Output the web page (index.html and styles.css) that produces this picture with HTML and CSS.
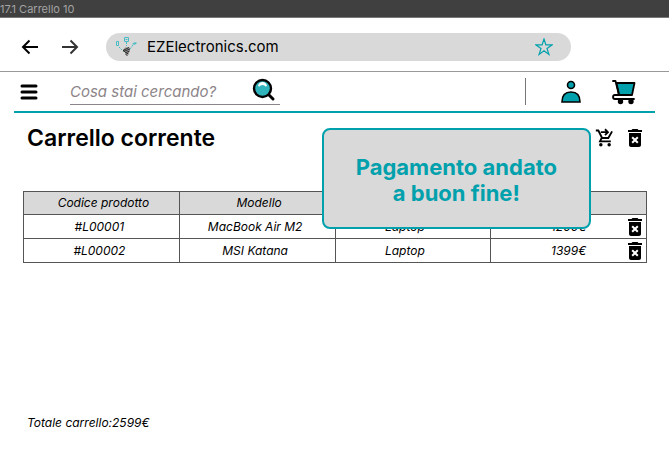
FILE: index.html
```html
<!DOCTYPE html>
<html lang="it">
<head>
<meta charset="utf-8">
<meta name="viewport" content="width=device-width, initial-scale=1">
<title>EZElectronics.com</title>
<link rel="stylesheet" href="styles.css">
</head>
<body>
<svg class="symbols" aria-hidden="true">
  <symbol id="trash" viewBox="0 0 24 24">
    <path d="M6 19c0 1.100.9 2 2 2h8c1.100 0 2-.9 2-2V7H6v12zm2.460-7.120l1.410-1.410L12 12.590l2.120-2.120 1.410 1.410L13.410 14l2.120 2.120-1.410 1.410L12 15.410l-2.120 2.120-1.410-1.410L10.590 14l-2.130-2.120zM15.500 4l-1-1h-5l-1 1H5v2h14V4z"/>
  </symbol>
</svg>
<div class="frame-title">17.1 Carrello 10</div>

<div class="browser-bar">
  <button class="icon-button" type="button" aria-label="Indietro">
    <svg width="18" height="16" viewBox="0 0 18 16" fill="none" stroke="#000" stroke-width="2"><path d="M17 8H2M8.500 1.500 2 8l6.500 6.500"/></svg>
  </button>
  <button class="icon-button" type="button" aria-label="Avanti">
    <svg width="18" height="16" viewBox="0 0 18 16" fill="none" stroke="#333" stroke-width="2"><path d="M1 8h15M9.500 1.500 16 8l-6.500 6.500"/></svg>
  </button>
  <div class="address">
    <svg width="24" height="22" viewBox="0 0 24 22" fill="none">
      <g stroke="#4bbcc5">
        <path d="M1.500 5.500h2v4h-2zM9.500 1.500h4v4h-4zM10.500 3.500h2" />
        <path d="M11.500 6v4M4 11l3 3M18 9l-3 4" stroke-dasharray="2 1"/>
      </g>
      <path d="M17 8q3-3 5-1-2 3-5 1z" fill="#4bbcc5"/>
      <path d="M8 14l2-2.500 4-.5 1 1.500-.5 3.500-3 3.500-1-2.500z" fill="#999"/>
      <path d="M8 14.500l6-3M8.500 15.500l6.500-2.500M10 17l4.500-2M10.500 18.500l3-1.500M11.500 20l1.500-1.500M8 14l2.500 2.500" stroke="#222" stroke-width=".9"/>
    </svg>
    <span class="url">EZElectronics.com</span>
    <button class="icon-button" type="button" aria-label="Aggiungi ai preferiti">
      <svg width="18" height="18" viewBox="0 0 18 18" fill="none" stroke="#00a1ac" stroke-width="1.200"><path d="M9 1l1.900 5.900h6.100l-5 3.600 1.900 5.900L9 12.800l-4.900 3.600L6 10.500 1 6.900h6.100z"/></svg>
    </button>
  </div>
</div>

<header class="site-header">
  <button class="icon-button" type="button" aria-label="Menu">
    <svg width="18" height="16" viewBox="0 0 18 16" stroke="#000" stroke-width="3" stroke-linecap="round"><path d="M2 2h14M2 8h14M2 14h14"/></svg>
  </button>
  <form class="search">
    <input type="search" placeholder="Cosa stai cercando?" aria-label="Cerca prodotti">
    <button class="icon-button" type="button" aria-label="Cerca">
      <svg width="24" height="24" viewBox="0 0 24 24">
        <path d="M17 17l4 4" stroke="#000" stroke-width="3" stroke-linecap="round"/>
        <circle cx="10.500" cy="10.500" r="8.500" fill="#31b3bb" stroke="#000" stroke-width="2.400"/>
        <path d="M6 8Q7 4 10.500 4t4.500 4q-1.500 1-2.500-.5-2-1-4 0-1 1.500-2.500.5z" fill="#fff"/>
      </svg>
    </button>
  </form>
  <div class="account">
    <button class="icon-button" type="button" aria-label="Profilo">
      <svg width="22" height="24" viewBox="0 0 22 24" fill="#00a1ac" stroke="#000" stroke-width="1.600"><circle cx="11" cy="5" r="3.500"/><path d="M2 22q0-10 9-10t9 10z"/></svg>
    </button>
    <button class="icon-button" type="button" aria-label="Carrello">
      <svg width="26" height="26" viewBox="0 0 26 26" fill="none" stroke="#000" stroke-width="1.800" stroke-linejoin="round" stroke-linecap="round">
        <path d="M5.500 4h18L21 16H8z" fill="#00a1ac"/>
        <path d="M2 2h2.500L8 16H4q-2 0-2 2t2 2h19"/>
        <circle cx="9.500" cy="22.500" r="1.800" fill="#000"/><circle cx="20" cy="22.500" r="1.800" fill="#000"/>
      </svg>
    </button>
  </div>
</header>

<main>
  <div class="heading">
    <h1>Carrello corrente</h1>
    <div class="actions">
      <button class="icon-button" type="button" aria-label="Procedi al pagamento">
        <svg width="20" height="20" viewBox="0 0 24 24" fill="none" stroke="#000" stroke-width="2.200">
          <path d="M1 3h3l4.500 9h7.500l4.500-8M8 12l-2 4h13M7 5h8M12 1.500l3.500 3.500L12 8.500"/>
          <circle cx="7" cy="20" r="1" /><circle cx="17" cy="20" r="1"/>
        </svg>
      </button>
      <button class="icon-button" type="button" aria-label="Svuota carrello"><svg width="24" height="24"><use href="#trash"/></svg></button>
    </div>
  </div>

  <table class="cart">
    <thead>
      <tr><th scope="col">Codice prodotto</th><th scope="col">Modello</th><th scope="col"></th><th scope="col"></th></tr>
    </thead>
    <tbody>
      <tr>
        <td>#L00001</td><td>MacBook Air M2</td><td class="category">Laptop</td>
        <td><div class="price"><span>1200€</span><button class="icon-button" type="button" aria-label="Rimuovi MacBook Air M2"><svg width="24" height="24"><use href="#trash"/></svg></button></div></td>
      </tr>
      <tr>
        <td>#L00002</td><td>MSI Katana</td><td class="category">Laptop</td>
        <td><div class="price"><span>1399€</span><button class="icon-button" type="button" aria-label="Rimuovi MSI Katana"><svg width="24" height="24"><use href="#trash"/></svg></button></div></td>
      </tr>
    </tbody>
  </table>

  <p class="total">Totale carrello:2599€</p>
  <div class="toast" role="status">Pagamento andato<br>a buon fine!</div>
</main>
</body>
</html>
```
FILE: styles.css
```css
* {
  box-sizing: border-box;
}

body {
  margin: 0;
  background: #fff;
  color: #000;
  font-family: Inter, sans-serif;
  font-size: 12px;
}

.symbols {
  display: none;
}

svg {
  display: block;
  flex: none;
}

.icon-button {
  flex: none;
  padding: 0;
  border: 0;
  background: none;
  cursor: pointer;
}

.frame-title {
  height: 18px;
  background: #404040;
  border-bottom: 1px solid #777;
  color: #a3a3a3;
  font-size: 11px;
  line-height: 18px;
}

.browser-bar {
  display: flex;
  align-items: center;
  gap: 22px;
  height: 54px;
  padding: 4px 98px 0 21px;
  border-bottom: 1px solid #999;
}

.address {
  display: flex;
  flex: 1;
  align-items: center;
  gap: 8px;
  height: 28px;
  margin-left: 5px;
  padding: 0 18px 0 9px;
  border-radius: 14px;
  background: #d9d9d9;
}

.url {
  flex: 1;
  font-size: 15px;
}

.site-header {
  display: flex;
  align-items: center;
  height: 41px;
  margin: 0 14px;
  padding: 0 18px 0 6px;
  border-bottom: 2px solid #00a1ac;
}

.search {
  display: flex;
  align-items: center;
  width: 210px;
  height: 26px;
  margin: 0 0 0 32px;
  padding: 0 4px 0 0;
  border-bottom: 1px solid #8c8488;
}

.search input {
  flex: 1;
  min-width: 0;
  padding: 0;
  border: 0;
  outline: 0;
  background: none;
  font: italic 15px Inter, sans-serif;
}

.search button {
  align-self: flex-end;
  margin-bottom: 2px;
}

.search input::placeholder {
  color: #8c8488;
}

.account {
  display: flex;
  align-items: center;
  gap: 29px;
  height: 27px;
  margin-left: auto;
  padding-left: 34px;
  border-left: 1px solid #777;
}

main {
  position: relative;
  padding: 0 22px 0 23px;
}

.heading {
  display: flex;
  align-items: center;
  justify-content: space-between;
  height: 50px;
  padding-left: 4px;
}

h1 {
  margin: 0;
  font-size: 23px;
  font-weight: 600;
}

.actions {
  display: flex;
  align-items: center;
  gap: 8px;
}

.cart {
  width: 100%;
  margin-top: 28px;
  border-collapse: collapse;
  table-layout: fixed;
  font-style: italic;
  text-align: center;
}

.cart th,
.cart td {
  height: 24px;
  padding: 0;
  border: 1px solid #555;
  font-weight: 400;
  line-height: 16px;
}

.cart th {
  height: 23px;
  padding-left: 4px;
  background: #d9d9d9;
}

.cart td {
  padding-right: 4px;
}

.cart .category {
  padding-right: 16px;
}

.cart td:last-child {
  padding: 0;
}

.price {
  display: grid;
  grid-template-columns: 1fr auto 1fr;
  align-items: center;
  height: 23px;
}

.price span {
  grid-column: 2;
}

.price button {
  justify-self: end;
  margin-right: -1px;
}

.total {
  margin: 152px 0 0 4px;
  font-style: italic;
  line-height: 16px;
}

.toast {
  position: absolute;
  top: 15px;
  right: 78px;
  padding: 24px 32px 21px;
  border: 2px solid #00a1ac;
  border-radius: 8px;
  background: #d9d9d9;
  color: #00a1ac;
  font-size: 22px;
  font-weight: 700;
  line-height: 26px;
  text-align: center;
}
```
